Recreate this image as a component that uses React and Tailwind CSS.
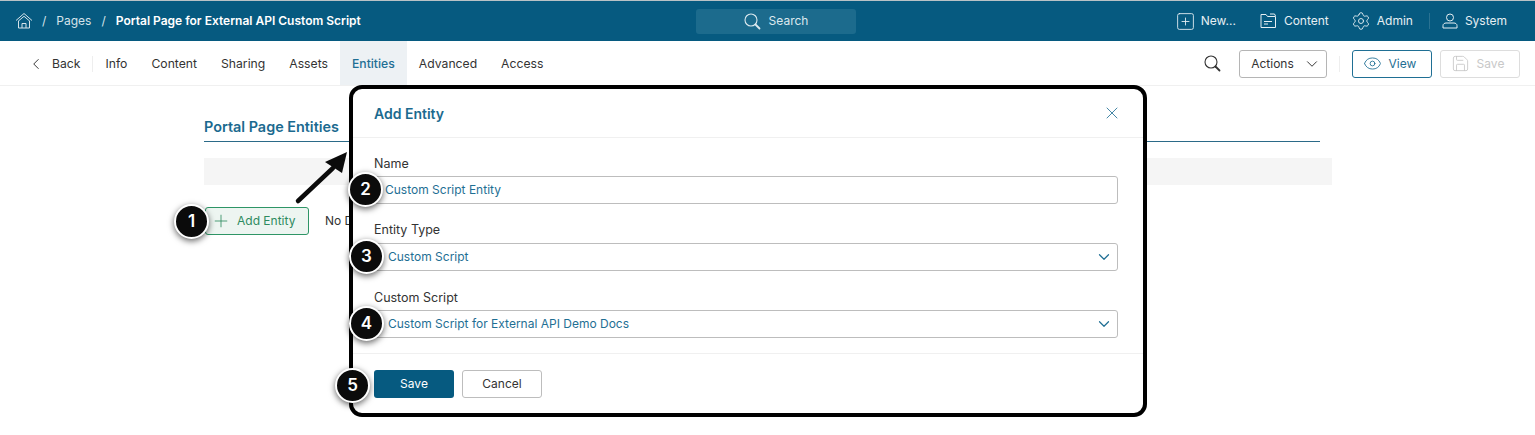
import { ChevronDown, ChevronLeft, Eye, Plus, Save, Settings, SquarePlus, X } from "lucide-react";

const tabs = ["Info", "Content", "Sharing", "Assets", "Entities", "Advanced", "Access"];

function HomeIcon() {
  return (
    <svg width="18" height="18" viewBox="0 0 18 18" fill="none" stroke="#d5e3ea" strokeWidth="1">
      <path d="M1 8.500 9 1.500l8 7" />
      <path d="M3.200 9.200 9 4.300l5.800 4.900" />
      <path d="M3.500 9v7h11V9" />
      <path d="M7 16v-4.500h4V16" />
    </svg>
  );
}

function FolderIcon() {
  return (
    <svg width="17" height="16" viewBox="0 0 17 16" fill="none" stroke="#e6eff3" strokeWidth="1">
      <path d="M1 14.500V1.500h5l1.500 2h8v11z" />
      <path d="M10 1h4.500l1 2" />
      <path d="M4 8.500h8M4 11h4" />
    </svg>
  );
}

function UserIcon() {
  return (
    <svg width="16" height="16" viewBox="0 0 16 16" fill="none" stroke="#e6eff3" strokeWidth="1">
      <circle cx="8" cy="4.500" r="3.500" />
      <path d="M1 15v-2.500c0-1.500 1.500-2.500 3-2.500h8c1.500 0 3 1 3 2.500V15z" />
    </svg>
  );
}

function SearchIcon({ color, size }) {
  return (
    <svg width={size} height={size} viewBox="0 0 17 17" fill="none" stroke={color}>
      <circle cx="7" cy="7" r="6" strokeWidth="1.100" />
      <path d="M11.500 11.500 15.500 15.500" strokeWidth="1.800" strokeLinecap="round" />
    </svg>
  );
}

function Badge({ n, className }) {
  return (
    <div className={`absolute flex h-[35px] w-[35px] items-center justify-center rounded-full border-2 border-white bg-[#0b0b0b] text-[17px] font-semibold text-white shadow-[0_2px_6px_rgba(0,0,0,0.6)] ${className}`}>
      {n}
    </div>
  );
}

function Field({ label, value, select, className, labelClass = "mb-[4px]" }) {
  return (
    <div className={className}>
      <div className={`h-[17px] text-[12.5px] leading-[17px] text-[#333] ${labelClass}`}>{label}</div>
      <div className={`flex h-[28px] items-center justify-between rounded-[3px] border border-[#bdbdbd] pr-[4px] text-[12px] text-[#1f6f94] ${select ? "pl-[13px]" : "pl-[10px]"}`}>
        <span>{value}</span>
        {select && <ChevronDown size={18} strokeWidth={1.6} className="text-[#1f6f94]" />}
      </div>
    </div>
  );
}

export default function App() {
  return (
    <div className="relative h-[435px] w-[1535px] overflow-hidden bg-white font-['Inter',sans-serif]">
      {/* barre du haut */}
      <header className="relative grid h-[41px] grid-cols-[696px_160px_1fr] items-center border-t border-[#b9c2c6] bg-[#065a80] text-white">
        <div className="flex items-center pl-[15px] text-[12px]">
          <HomeIcon />
          <span className="ml-[9px] text-[#d5e3ea]">/</span>
          <span className="ml-[10px] text-[#d5e3ea]">Pages</span>
          <span className="ml-[10px] text-[#d5e3ea]">/</span>
          <span className="ml-[10px] font-semibold">Portal Page for External API Custom Script</span>
        </div>
        <div className="flex h-[25px] items-center justify-center gap-[8px] rounded-[3px] bg-[#1c6b8d] text-[12px] text-[#dce9ef]">
          <SearchIcon color="#dce9ef" size={17} />
          Search
        </div>
        <div className="flex items-center justify-end pr-[28px] text-[12px] text-[#e6eff3]">
          <SquarePlus size={21} strokeWidth={1} />
          <span className="ml-[5px]">New...</span>
          <span className="ml-[24px]"><FolderIcon /></span>
          <span className="ml-[7px]">Content</span>
          <Settings size={20} strokeWidth={1.1} className="ml-[22px]" />
          <span className="ml-[6px]">Admin</span>
          <div className="ml-[16px] h-[16px] w-px bg-[#2a7292]" />
          <span className="ml-[12px]"><UserIcon /></span>
          <span className="ml-[7px]">System</span>
        </div>
      </header>

      {/* onglets */}
      <nav className="flex h-[45px] items-stretch justify-between border-b border-[#f0f0f0] text-[12.2px] text-[#333]">
        <div className="flex items-stretch pl-[27px]">
          <div className="flex items-center pt-[2px]">
            <ChevronLeft size={18} strokeWidth={1.3} />
            <span className="ml-[7px]">Back</span>
            <div className="ml-[12px] h-[16px] w-px bg-[#eeeeee]" />
          </div>
          <div className="flex items-stretch">
            {tabs.map((t) => (
              <div key={t} className={`flex items-center px-[12px] pt-[2px] ${t === "Entities" ? "bg-[#edf1f4] font-medium text-[#1f6f94]" : ""}`}>
                {t}
              </div>
            ))}
          </div>
        </div>
        <div className="flex items-center pr-[15px] pt-px">
          <SearchIcon color="#333" size={17} />
          <button className="ml-[18px] flex h-[28px] w-[88px] items-center justify-center gap-[9px] rounded-[3px] border border-[#b5b5b5] pl-[6px] text-[12px]">
            Actions <ChevronDown size={18} strokeWidth={1.3} />
          </button>
          <div className="ml-[12px] h-[16px] w-px bg-[#eeeeee]" />
          <button className="ml-[12px] flex h-[28px] w-[80px] items-center justify-center gap-[7px] rounded-[3px] border border-[#1f6f94] pr-[5px] text-[12px] text-[#1f6f94]">
            <Eye size={19} strokeWidth={1.1} /> View
          </button>
          <button className="ml-[8px] flex h-[28px] w-[80px] items-center justify-center gap-[7px] rounded-[3px] border border-[#dddddd] pr-[5px] text-[12px] text-[#c8c8c8]">
            <Save size={19} strokeWidth={1.1} /> Save
          </button>
        </div>
      </nav>

      {/* contenu */}
      <main className="pl-[204px] pt-[32px]">
        <div className="w-[1116px] border-b border-[#2b6a88] pb-[5px] text-[14.4px] font-semibold leading-[18px] text-[#1b6a8f]">
          Portal Page Entities
        </div>
        <div className="mt-[16px] h-[27px] w-[1128px] bg-[#f5f5f5]" />
        <div className="mt-[22px] flex items-center text-[12px]">
          <button className="ml-px flex h-[28px] w-[104px] items-center rounded-[3px] border border-[#2e9566] bg-[#edf5f1] pl-[5px] text-[#2e8b5f]">
            <Plus size={20} strokeWidth={1} />
            <span className="ml-[6px]">Add Entity</span>
          </button>
          <span className="ml-[16px] text-[#333]">No Data</span>
        </div>
      </main>

      {/* fenêtre modale, par-dessus la page */}
      <div className="absolute left-[349px] top-[85px] h-[332px] w-[798px] rounded-[13px] border-[4px] border-black bg-white">
        <div className="flex h-[49px] items-center justify-between border-b border-[#f0f0f0] pl-[21px] pr-[24px]">
          <span className="text-[14px] font-semibold text-[#1b6a8f]">Add Entity</span>
          <X size={20} strokeWidth={1} className="mr-[-3px] text-[#1f6f94]" />
        </div>
        <div className="h-[216px] border-b border-[#f0f0f0] pl-[21px] pr-[25px] pt-[17px]">
          <Field className="mb-[17px]" label="Name" value="Custom Script Entity" />
          <Field className="mb-[18px]" labelClass="mb-[5px]" label="Entity Type" value="Custom Script" select />
          <Field label="Custom Script" value="Custom Script for External API Demo Docs" select />
        </div>
        <div className="flex items-center gap-[8px] pl-[21px] pt-[16px] text-[12px]">
          <button className="h-[28px] w-[80px] rounded-[3px] bg-[#065a80] text-white">Save</button>
          <button className="h-[28px] w-[80px] rounded-[3px] border border-[#bdbdbd] text-[#333]">Cancel</button>
        </div>
      </div>

      {/* annotations */}
      <svg className="absolute left-[290px] top-[145px]" width="70" height="65" viewBox="0 0 70 65">
        <line x1="8" y1="56" x2="43" y2="23" stroke="#0b0b0b" strokeWidth="4.5" strokeLinecap="round" />
        <polygon points="57,7 35,17 52,28" fill="#0b0b0b" />
      </svg>
      <Badge n="1" className="left-[174px] top-[204px]" />
      <Badge n="2" className="left-[348px] top-[172px]" />
      <Badge n="3" className="left-[349px] top-[239px]" />
      <Badge n="4" className="left-[349px] top-[306px]" />
      <Badge n="5" className="left-[335px] top-[368px]" />
    </div>
  );
}
